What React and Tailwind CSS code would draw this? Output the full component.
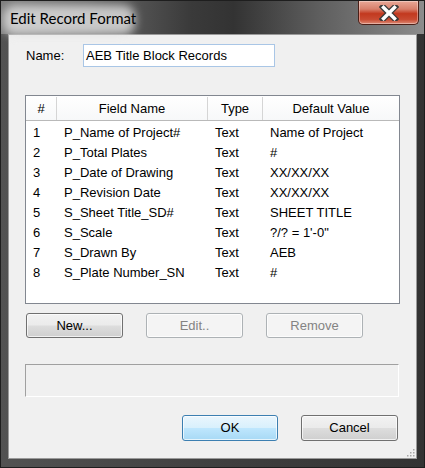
import React from 'react';

const records = [
  { id: 1, name: 'P_Name of Project#', type: 'Text', value: 'Name of Project' },
  { id: 2, name: 'P_Total Plates', type: 'Text', value: '#' },
  { id: 3, name: 'P_Date of Drawing', type: 'Text', value: 'XX/XX/XX' },
  { id: 4, name: 'P_Revision Date', type: 'Text', value: 'XX/XX/XX' },
  { id: 5, name: 'S_Sheet Title_SD#', type: 'Text', value: 'SHEET TITLE' },
  { id: 6, name: 'S_Scale', type: 'Text', value: "?/? = 1'-0\"" },
  { id: 7, name: 'S_Drawn By', type: 'Text', value: 'AEB' },
  { id: 8, name: 'S_Plate Number_SN', type: 'Text', value: '#' },
];

function CloseButton() {
  return (
    <div className="absolute right-[5px] top-0 flex h-[24px] w-[61px] items-center justify-center rounded-b-[5px] border border-t-0 border-[#4b1f17] bg-[linear-gradient(to_bottom,#e9a897_0%,#d8806c_35%,#c2391f_55%,#c84a31_80%,#dc8a74_100%)] shadow-[inset_0_0_0_1px_rgba(255,255,255,0.35)]">
      <svg width="20" height="16" viewBox="0 0 20 16">
        <path d="M4 2 L16 14 M16 2 L4 14" stroke="#3a3a3a" strokeWidth="6" strokeLinecap="square" />
        <path d="M4.5 2.5 L15.5 13.5 M15.5 2.5 L4.5 13.5" stroke="#ffffff" strokeWidth="3.4" strokeLinecap="square" />
      </svg>
    </div>
  );
}

function PushButton({ children, disabled, primary, className = '' }) {
  let look = 'border-[#707070] bg-[linear-gradient(to_bottom,#f2f2f2_0%,#ebebeb_48%,#dddddd_52%,#cfcfcf_100%)] text-black';
  if (disabled) look = 'border-[#adb2b5] bg-[#f4f4f4] text-[#838383]';
  if (primary) look = 'border-[#3c7fb1] bg-[linear-gradient(to_bottom,#eaf6fd_0%,#d9f0fc_48%,#bee6fd_52%,#a7d9f5_100%)] text-black';
  return (
    <button
      className={`flex items-center justify-center rounded-[3px] border text-[13px] shadow-[inset_0_0_0_1px_rgba(255,255,255,0.7)] ${look} ${className}`}
    >
      {children}
    </button>
  );
}

export default function App() {
  return (
    <div className="relative h-[468px] w-[425px] overflow-hidden border border-[#1e1e1e] bg-[linear-gradient(to_right,#525252_0%,#404040_50%,#333333_100%)] font-['Liberation_Sans',Arial,sans-serif]">
      {/* Title bar */}
      <div className="relative h-[33px] bg-[linear-gradient(to_right,#7e7e7e_0%,#6a6a6a_20%,#3a3a3a_45%,#333333_55%,#5e5e5e_75%,#8c8c8c_100%)]">
        <div className="absolute left-[2px] top-[4px] h-[30px] w-[132px] rounded-[12px] bg-[#e2e2e2] opacity-80 blur-[5px]" />
        <span className="absolute left-[9px] top-[6px] font-['Lato',sans-serif] text-[15px] text-black">
          Edit Record Format
        </span>
        <CloseButton />
      </div>

      {/* Client area */}
      <div className="mx-[7px] flex h-[425px] flex-col border border-[#9a9a9a] bg-[#f0f0f0] pl-[16px]">
        <div className="mt-[9px] flex h-[23px] items-center">
          <span className="w-[58px] pl-[1px] text-[13px] text-black">Name:</span>
          <div className="flex h-[23px] w-[192px] items-center border border-[#a9c6e6] bg-white pl-[2px] text-[13px] text-black">
            AEB Title Block Records
          </div>
        </div>

        {/* Record list */}
        <div className="mt-[28px] flex h-[209px] w-[375px] flex-col border border-[#828790] bg-white text-[13px] text-black">
          <div className="flex h-[25px] items-center border-b border-[#b9b9b9] bg-[linear-gradient(to_bottom,#ffffff,#f7f8f9)] pt-[1px]">
            <div className="flex h-full w-[31px] items-center justify-center border-r border-[#d5d5d5]">#</div>
            <div className="flex h-full w-[151px] items-center justify-center border-r border-[#d5d5d5]">Field Name</div>
            <div className="flex h-full w-[55px] items-center justify-center border-r border-[#d5d5d5]">Type</div>
            <div className="flex h-full flex-1 items-center justify-center">Default Value</div>
          </div>
          <div className="pt-[2px]">
            {records.map((r) => (
              <div key={r.id} className="flex h-[20px] items-center">
                <div className="w-[38px] pl-[7px]">{r.id}</div>
                <div className="w-[151px]">{r.name}</div>
                <div className="w-[55px]">{r.type}</div>
                <div className="flex-1">{r.value}</div>
              </div>
            ))}
          </div>
        </div>

        <div className="mt-[9px] flex h-[25px] gap-[23px] pl-[1px]">
          <PushButton className="w-[97px]">New...</PushButton>
          <PushButton className="w-[97px]" disabled>Edit..</PushButton>
          <PushButton className="w-[97px]" disabled>Remove</PushButton>
        </div>

        {/* Status box */}
        <div className="mt-[26px] h-[33px] w-[374px] border border-[#a0a0a0] border-b-white border-r-white" />

        <div className="mt-[18px] flex h-[26px] gap-[23px] pl-[157px]">
          <PushButton className="w-[96px]" primary>OK</PushButton>
          <PushButton className="w-[97px]">Cancel</PushButton>
        </div>
      </div>

      {/* Size grip */}
      <svg className="absolute bottom-[10px] right-[9px]" width="10" height="10" viewBox="0 0 10 10">
        {[[8, 2], [8, 5], [5, 5], [8, 8], [5, 8], [2, 8]].map(([x, y], i) => (
          <rect key={i} x={x} y={y} width="1.5" height="1.5" fill="#a8a8a8" />
        ))}
      </svg>
    </div>
  );
}
